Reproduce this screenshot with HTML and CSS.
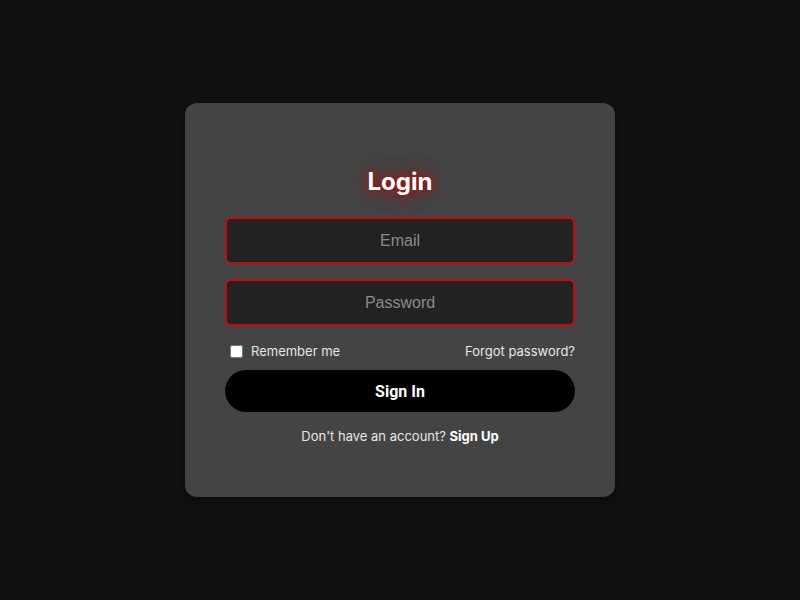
FILE: index.html
```html
<!DOCTYPE html>
<html>
<head>
<meta charset="utf-8">
<link rel="stylesheet" href="styles.css">
</head>
<body>
<div class="page">
  <form class="card">
    <h1 class="title">Login</h1>
    <input class="field" type="email" placeholder="Email">
    <input class="field" type="password" placeholder="Password">
    <div class="options">
      <label class="remember"><input type="checkbox" class="check"> Remember me</label>
      <a class="forgot" href="#">Forgot password?</a>
    </div>
    <button class="btn" type="button">Sign In</button>
    <p class="footer">Don't have an account? <a href="#" class="signup">Sign Up</a></p>
  </form>
</div>
</body>
</html>
```
FILE: styles.css
```css
* { box-sizing: border-box; }
html, body { margin: 0; padding: 0; }
body {
  background: #111111;
  font-family: "Inter", "Open Sans", sans-serif;
  color: #fff;
}
.page {
  height: 600px;
  display: flex;
  align-items: center;
  justify-content: center;
}
.card {
  width: 430px;
  height: 394px;
  background: #444444;
  border-radius: 12px;
  padding: 64px 40px 40px;
  display: flex;
  flex-direction: column;
  box-shadow: 0 4px 12px rgba(0,0,0,0.4);
}
.title {
  margin: 0 0 20px;
  text-align: center;
  font-size: 24px;
  line-height: 30px;
  font-weight: 700;
  color: #fff;
  text-shadow: 0 0 10px #c00000, 0 0 20px rgba(200,0,0,0.6);
}
.field {
  width: 350px;
  height: 47px;
  margin: 0 0 15px;
  background: #222222;
  border: 2px solid #c80c0c;
  border-radius: 6px;
  color: #ddd;
  font-family: "Liberation Sans", Arial, sans-serif;
  font-size: 16px;
  text-align: center;
  outline: none;
}
.field::placeholder { color: #8a8a8a; }
.options {
  display: flex;
  justify-content: space-between;
  align-items: center;
  margin-top: 0;
  height: 20px;
  font-size: 13px;
}
.remember {
  display: flex;
  align-items: center;
  color: #e6e6e6;
}
.check {
  width: 13px;
  height: 13px;
  margin: 0 8px 0 5px;
}
.forgot {
  color: #e6e6e6;
  text-decoration: none;
}
.btn {
  margin-top: 9px;
  height: 42px;
  border: none;
  border-radius: 21px;
  background: #000;
  color: #fff;
  font-family: "Roboto", sans-serif;
  font-weight: 700;
  font-size: 16px;
  cursor: pointer;
}
.footer {
  margin: 16px 0 0;
  text-align: center;
  font-size: 13px;
  color: #e6e6e6;
}
.signup {
  color: #fff;
  font-weight: 700;
  text-decoration: none;
}
```
